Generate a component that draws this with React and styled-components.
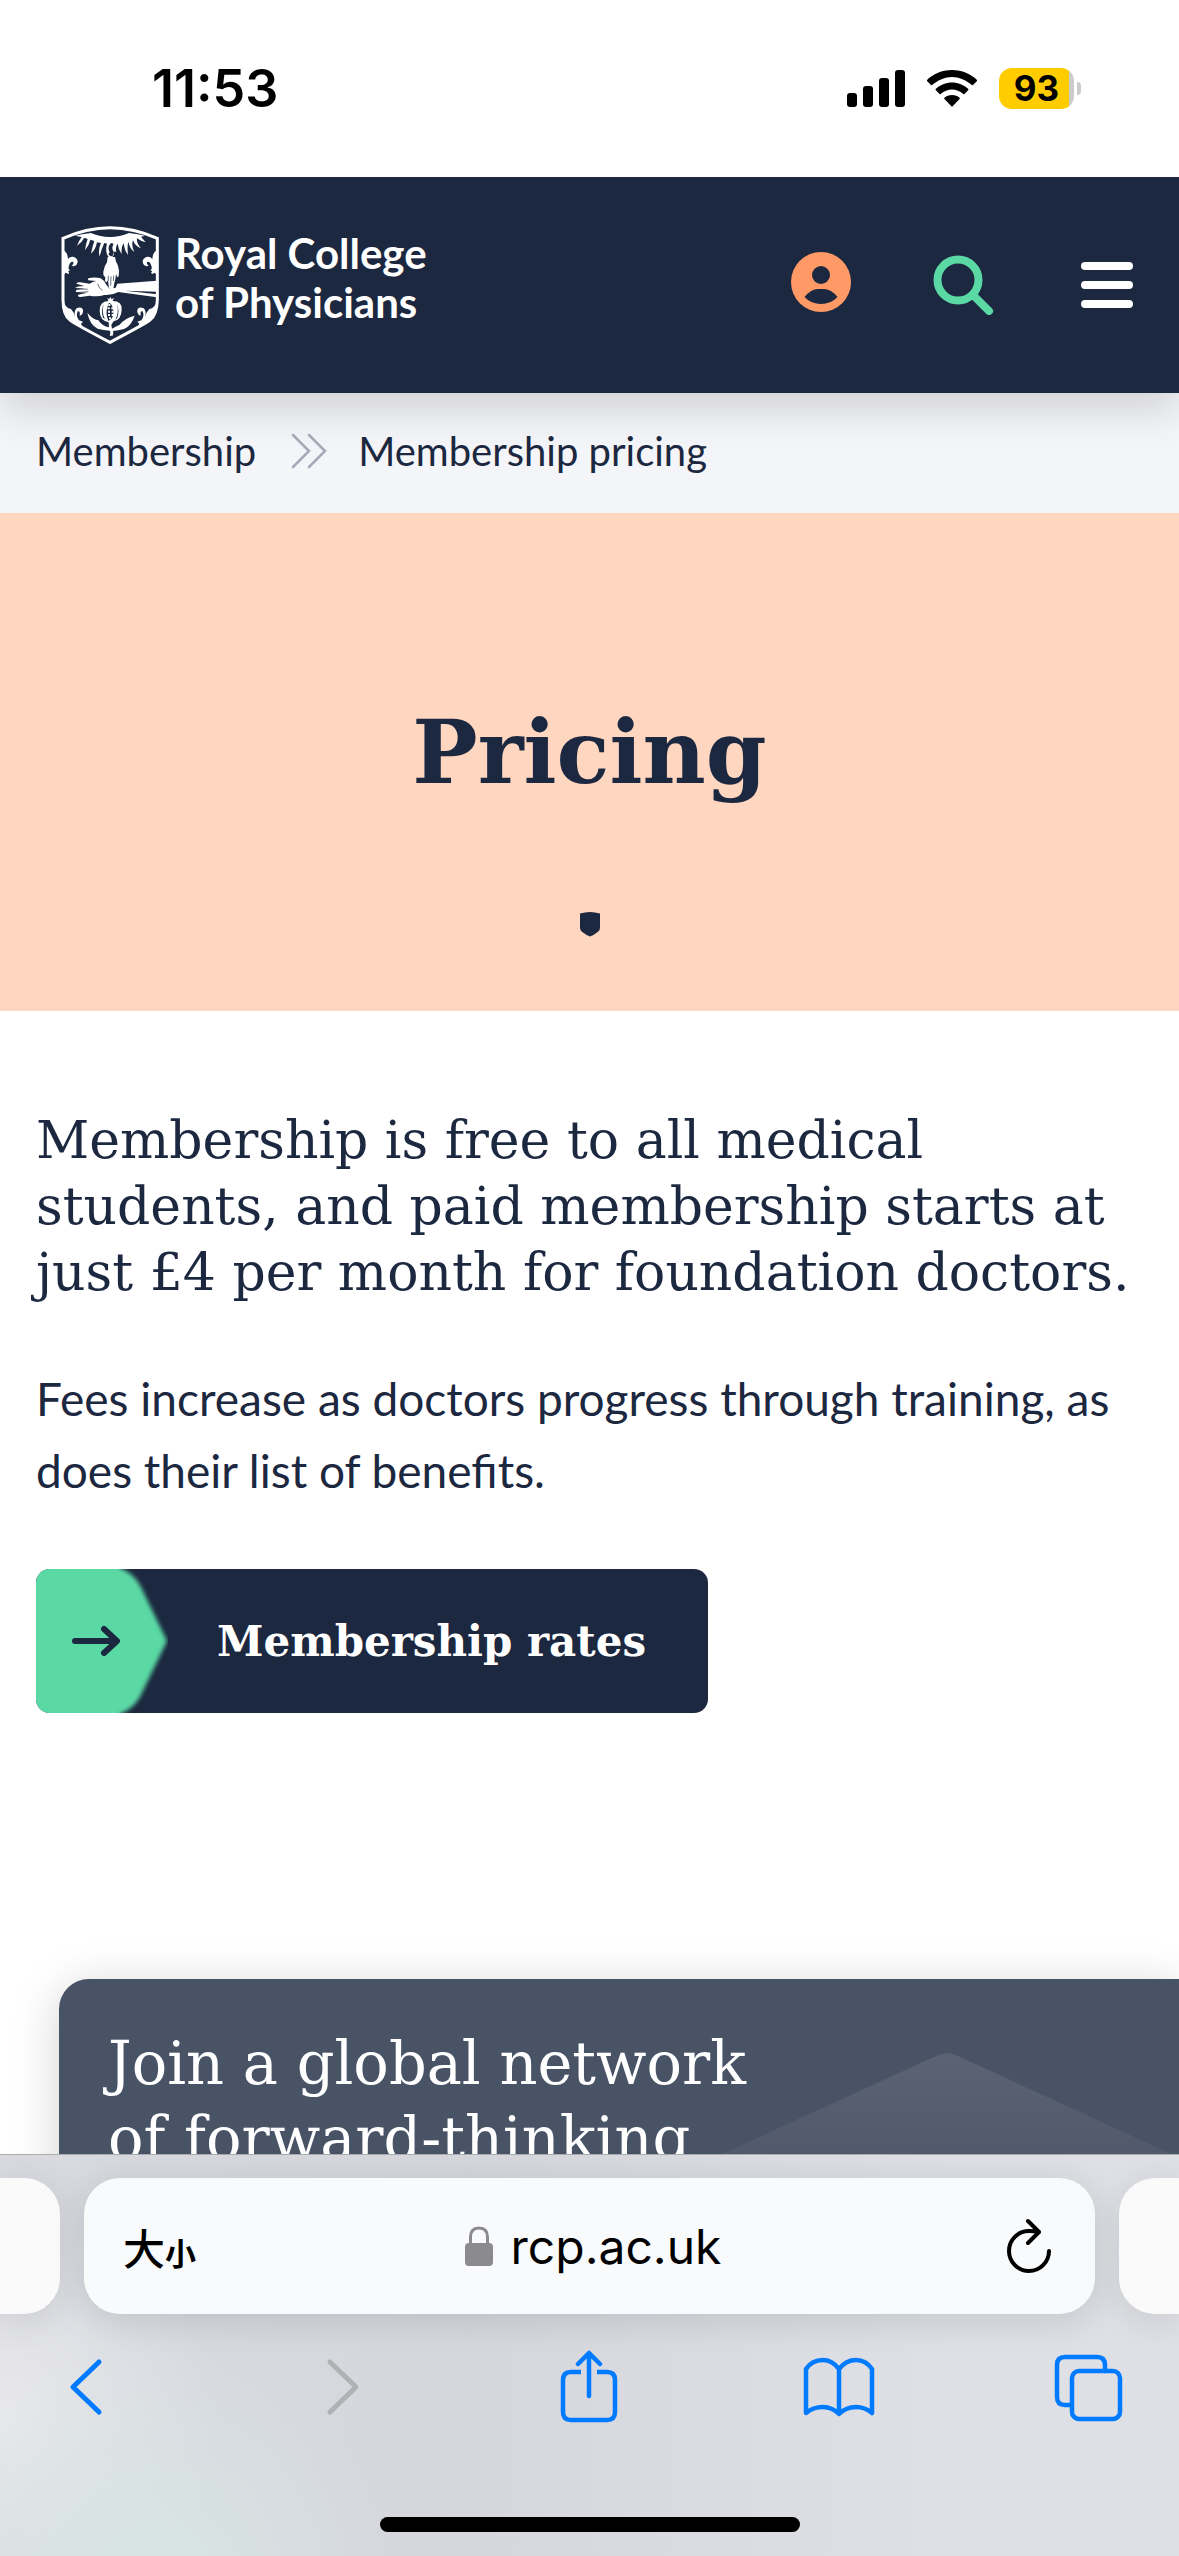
import styled, { createGlobalStyle } from "styled-components";

const navy = "#1c2840";
const green = "#5ad9a4";
const blue = "#007aff";
const slab = `"DejaVu Serif", serif`;
const sans = `Lato, "Liberation Sans", sans-serif`;
const system = `Inter, "Liberation Sans", sans-serif`;

function App() {
  return (
    <>
      <GlobalStyle />
      <Screen>
        <StatusBar>
          <time>11:53</time>
          <StatusIcons>
            <SignalIcon />
            <WifiIcon />
            <Battery>
              <BatteryLevel>93</BatteryLevel>
              <BatteryCap />
            </Battery>
          </StatusIcons>
        </StatusBar>

        <Page>
          <Header>
            <Brand href="#">
              <Crest />
              <BrandName>
                Royal College
                <br />
                of Physicians
              </BrandName>
            </Brand>
            <HeaderActions>
              <IconButton aria-label="Account"><AccountIcon /></IconButton>
              <IconButton aria-label="Search"><SearchIcon /></IconButton>
              <IconButton aria-label="Menu"><MenuIcon /></IconButton>
            </HeaderActions>
          </Header>

          <Breadcrumbs aria-label="Breadcrumb">
            <a href="#">Membership</a>
            <svg width="40" height="36" viewBox="0 0 40 36" fill="none" stroke="#a7a9b8" strokeWidth="2.500" strokeLinecap="round" aria-hidden="true">
              <path d="M6 2 L22 18 L6 34 M22 2 L38 18 L22 34" />
            </svg>
            <a href="#">Membership pricing</a>
          </Breadcrumbs>

          <Hero>
            <h1>Pricing</h1>
            <svg width="22" height="26" viewBox="0 0 22 26" fill={navy} aria-hidden="true">
              <path d="M1 2.500 Q11 -0.500 21 2.500 V16 Q21 20 18 21.500 Q15 24 11 25.500 Q7 24 4 21.500 Q1 20 1 16 Z" />
            </svg>
          </Hero>

          <Content>
            <Intro>
              Membership is free to all medical students, and paid membership starts at just £4 per month for foundation doctors.
            </Intro>
            <Body>
              Fees increase as doctors progress through training, as does their list of benefits.
            </Body>
            <RatesLink href="#">
              <svg width="132" height="144" viewBox="0 0 132 144" aria-hidden="true">
                <defs>
                  <filter id="soft" x="-10%" y="-10%" width="120%" height="120%">
                    <feGaussianBlur stdDeviation="2" />
                  </filter>
                </defs>
                <path d="M-10 -10 H84 V-1 Q97 4 104 16 L131 72 L104 128 Q97 140 84 145 V154 H-10 Z" fill={green} filter="url(#soft)" />
                <path d="M39 72 H80 M68 60 L81 72 L68 84" fill="none" stroke={navy} strokeWidth="6" strokeLinecap="round" strokeLinejoin="round" />
              </svg>
              <span>Membership rates</span>
            </RatesLink>
          </Content>

          <Card>
            <h2>
              Join a global network
              <br />
              of forward-thinking
            </h2>
            <CardShape />
          </Card>
        </Page>

        <BrowserBar>
          <TabStrip>
            <TabEdge $side="left" />
            <AddressBar>
              <TextSizeButton aria-label="Text size">大<small>小</small></TextSizeButton>
              <Address>
                <LockIcon />
                rcp.ac.uk
              </Address>
              <ReloadButton aria-label="Reload"><ReloadIcon /></ReloadButton>
            </AddressBar>
            <TabEdge $side="right" />
          </TabStrip>
          <Toolbar>
            <ToolButton aria-label="Back">
              <path d="M48 12 L22 37 L48 62" strokeWidth="5" />
            </ToolButton>
            <ToolButton aria-label="Forward" disabled>
              <path d="M29 12 L55 37 L29 62" strokeWidth="5" />
            </ToolButton>
            <ToolButton aria-label="Share">
              <path d="M29 22 H19 Q11 22 11 30 V62 Q11 70 19 70 H55 Q63 70 63 62 V30 Q63 22 55 22 H45" strokeLinecap="butt" />
              <path d="M37 46 V3 M26 14 L37 3 L48 14" />
            </ToolButton>
            <ToolButton aria-label="Bookmarks">
              <path d="M37 63 V19 Q30 10 21 10 Q10 10 4 19 V63 Q11 57 21 57 Q30 57 37 64 Q44 57 54 57 Q63 57 70 63 V19 Q64 10 54 10 Q44 10 37 19" />
            </ToolButton>
            <ToolButton aria-label="Tabs">
              <path d="M19 55 H13 Q5 55 5 47 V15 Q5 7 13 7 H45 Q53 7 53 15 V21" />
              <rect x="20" y="21" width="48" height="48" rx="7" />
            </ToolButton>
          </Toolbar>
          <HomeIndicator />
        </BrowserBar>
      </Screen>
    </>
  );
}

function SignalIcon() {
  return (
    <svg width="58" height="38" viewBox="0 0 58 38" aria-hidden="true">
      <rect x="0" y="23" width="10" height="14" rx="3" />
      <rect x="16" y="16" width="10" height="21" rx="3" />
      <rect x="32" y="8" width="10" height="29" rx="3" />
      <rect x="48" y="0" width="10" height="37" rx="3" />
    </svg>
  );
}

function WifiIcon() {
  return (
    <svg width="50" height="38" viewBox="0 1 50 38" aria-hidden="true">
      <path d="M25 1 C35 1 44 5 50 11 Q50.300 11.600 50 12 L46 16 Q45.400 16.400 44.800 16 C39 11 32 8 25 8 C18 8 11 11 5.200 16 Q4.600 16.400 4 16 L0 12 Q-0.300 11.600 0 11 C6 5 15 1 25 1 Z" />
      <path d="M25 13.500 C31 13.500 37 16 41.300 20 Q41.700 20.600 41.300 21 L37.500 25 Q36.900 25.400 36.300 25 C33 22 29 20.500 25 20.500 C21 20.500 17 22 13.700 25 Q13.100 25.400 12.500 25 L8.700 21 Q8.300 20.600 8.700 20 C13 16 19 13.500 25 13.500 Z" />
      <path d="M25 26 C28 26 30.500 27 32.600 28.800 Q33 29.400 32.600 30 L25.600 37.200 Q25 37.700 24.400 37.200 L17.400 30 Q17 29.400 17.400 28.800 C19.500 27 22 26 25 26 Z" />
    </svg>
  );
}

function AccountIcon() {
  return (
    <svg width="60" height="66" viewBox="0 0 60 66" aria-hidden="true">
      <circle cx="30" cy="30" r="30" fill="#ff9a66" />
      <circle cx="30" cy="23" r="9" fill={navy} />
      <path d="M13.500 45 Q20 37 27 37 H33 Q40 37 46.500 45 Q40 52 30 52 Q20 52 13.500 45 Z" fill={navy} />
    </svg>
  );
}

function SearchIcon() {
  return (
    <svg width="66" height="60" viewBox="0 0 66 60" fill="none" stroke={green} aria-hidden="true">
      <circle cx="25" cy="25" r="20.500" strokeWidth="8" />
      <path d="M40 40 L56 56" strokeWidth="8" strokeLinecap="round" />
    </svg>
  );
}

function MenuIcon() {
  return (
    <svg width="52" height="60" viewBox="0 0 52 60" fill="#fff" aria-hidden="true">
      <rect y="7" width="52" height="8" rx="4" />
      <rect y="26" width="52" height="8" rx="4" />
      <rect y="45" width="52" height="8" rx="4" />
    </svg>
  );
}

function LockIcon() {
  return (
    <svg width="28" height="40" viewBox="0 0 28 40" aria-hidden="true">
      <path d="M5.500 18 V11 Q5.500 2 14 2 Q22.500 2 22.500 11 V18" fill="none" stroke="#8b8a8f" strokeWidth="3" />
      <rect x="0" y="17" width="28" height="23" rx="4" fill="#8b8a8f" />
    </svg>
  );
}

function ReloadIcon() {
  return (
    <svg width="44" height="56" viewBox="0 0 44 56" fill="none" stroke="#000" strokeWidth="4" strokeLinecap="round" strokeLinejoin="round" aria-hidden="true">
      <path d="M42 33 A20 20 0 1 1 22 13 Q27 13 32 14 M21 3 L32 14 L21 25" />
    </svg>
  );
}

function Crest() {
  return (
    <svg width="98" height="119" viewBox="18 17 294 357" fill="#fff" aria-hidden="true">
      <path d="M24 54 Q165 -10 307 54 V238 Q306 284 284 300 Q268 312 165 366 Q62 312 46 300 Q24 284 24 238 Z" fill="none" stroke="#fff" strokeWidth="9" />
      {/* sun and rays */}
      <path d="M60 46 Q80 42 108 38 Q165 62 222 38 Q250 42 270 46 L258 49 Q264 56 272 66 Q256 62 246 54 Q244 68 258 84 Q240 78 234 60 Q228 74 238 95 Q224 84 220 64 Q216 78 219 104 Q208 90 206 68 Q198 80 200 102 Q190 88 188 70 Q180 80 184 94 H176 Q168 84 176 70 L168 68 Q156 80 164 96 Q160 100 158 106 Q150 92 156 70 L148 68 Q140 84 134 108 Q128 90 138 68 L126 66 Q122 88 108 100 Q112 80 118 62 L106 58 Q102 76 90 90 Q92 72 98 56 L88 52 Q82 64 66 76 Q70 64 80 50 Z" />
      <path d="M108 37 Q165 22 222 37 Q165 59 108 37 Z" fill={navy} />
      {/* descending hand */}
      <path d="M160 95 Q155 104 162 111 L173 109 Q180 101 174 94 Q178 107 168 108 Q158 104 160 95 Z" />
      <path d="M158 110 L180 110 Q181 124 189 136 Q194 150 191 168 Q188 173 185 168 L183 160 Q182 178 178 188 L175 205 Q167 209 162 204 L159 180 Q154 190 150 181 L151 170 Q144 168 145 154 Q148 136 156 126 Z" />
      <path d="M160 166 V182 M168 168 L167 196 M176 166 L175 182" stroke={navy} strokeWidth="2" fill="none" />
      {/* outstretched arm */}
      <path d="M60 203 Q66 197 88 197 L64 190 Q65 184 76 186 L104 190 Q112 184 124 182 L100 180 Q96 176 102 173 Q120 169 137 174 Q148 180 153 192 L164 206 L182 202 L187 190 L306 181 V214 L210 211 L306 222 V231 L190 215 Q170 226 148 224 Q128 230 104 226 L76 230 Q66 229 70 223 L96 217 L66 216 Q58 212 66 208 L90 206 Z" />
      <path d="M62 204 L98 207 M66 217 L100 214 M128 190 Q131 204 142 210" stroke={navy} strokeWidth="2" fill="none" />
      {/* pomegranate */}
      <path d="M157 232 L162 237 L166 230 L170 237 L177 232 L173 242 Q202 242 200 268 Q199 298 176 303 L169 313 L171 325 Q184 317 194 313 Q208 294 239 286 Q229 317 207 326 Q190 330 174 332 Q177 340 173 346 L164 346 Q168 338 165 331 Q145 330 128 325 Q104 313 97 277 Q112 296 130 300 Q142 318 162 321 L161 306 Q134 301 134 272 Q133 244 160 242 Z" />
      <path d="M162 247 Q148 274 160 302 Q179 296 174 264 Q171 251 162 247 Z M146 251 Q139 277 150 296 L144 292 Q137 270 146 251 Z M186 251 Q193 275 181 298 L187 292 Q194 270 186 251 Z" fill={navy} />
      <path d="M160 254 h6 m-8 10 h6 m5 0 h5 m-15 10 h6 m5 0 h5 m-16 10 h6 m5 0 h4 m-12 10 h6" stroke="#fff" strokeWidth="6" fill="none" />
      {/* fleurs-de-lis on the sides */}
      <path id="fleur-side" d="M25 90 Q38 96 39 116 Q45 108 54 109 Q68 113 68 124 Q66 135 58 137 Q55 139 50 135 Q57 132 55 125 Q46 122 42 136 Q38 146 45 150 L39 153 Q45 157 40 161 L31 157 L25 166 Z" />
      <use href="#fleur-side" transform="matrix(-1 0 0 1 331 0)" />
      <path id="fleur-base" d="M25 238 Q30 264 48 266 Q58 276 60 290 Q56 270 66 263 Q80 258 84 268 Q86 282 74 286 Q76 270 68 273 Q62 288 72 300 L84 304 L78 310 L84 322 L78 322 Q50 304 38 290 Q25 272 25 238 Z" />
      <use href="#fleur-base" transform="matrix(-1 0 0 1 331 0)" />
    </svg>
  );
}

function ToolButton({ children, ...props }) {
  return (
    <ToolButtonBase {...props}>
      <svg width="74" height="74" viewBox="0 0 74 74" fill="none" stroke="currentColor" strokeWidth="4.500" strokeLinecap="round" strokeLinejoin="round" aria-hidden="true">
        {children}
      </svg>
    </ToolButtonBase>
  );
}

const GlobalStyle = createGlobalStyle`
  * {
    box-sizing: border-box;
    margin: 0;
  }
  body {
    background: #fff;
    color: ${navy};
    font-family: ${sans};
  }
  a {
    color: inherit;
    text-decoration: none;
  }
  button {
    padding: 0;
    border: 0;
    background: none;
    color: inherit;
  }
  svg {
    display: block;
    flex-shrink: 0;
  }
`;

const Screen = styled.div`
  display: flex;
  flex-direction: column;
  height: 100vh;
  overflow: hidden;
`;

const StatusBar = styled.div`
  display: flex;
  align-items: center;
  justify-content: space-between;
  flex-shrink: 0;
  height: 177px;
  padding: 0 98px 0 152px;
  color: #000;
  font-family: ${system};
  font-size: 52px;
  font-weight: 600;
`;

const StatusIcons = styled.div`
  display: flex;
  align-items: center;
  gap: 22px;
`;

const Battery = styled.div`
  display: flex;
  align-items: center;
  gap: 3px;
`;

const BatteryLevel = styled.span`
  width: 75px;
  border-radius: 13px;
  background: linear-gradient(90deg, #ffcc00 70px, #cbcbcb 70px);
  font-size: 35px;
  font-weight: 700;
  line-height: 41px;
  text-align: center;
`;

const BatteryCap = styled.span`
  width: 4px;
  height: 13px;
  border-radius: 0 4px 4px 0;
  background: #cbcbcb;
`;

const Page = styled.main`
  flex: 1;
  min-height: 0;
  overflow: hidden;
`;

const Header = styled.header`
  position: relative;
  display: flex;
  align-items: center;
  justify-content: space-between;
  height: 216px;
  padding: 0 46px 0 61px;
  background: ${navy};
  box-shadow: 0 16px 40px rgba(0, 0, 0, 0.15);
`;

const Brand = styled.a`
  display: flex;
  gap: 16px;
  color: #fff;
`;

const BrandName = styled.span`
  padding-top: 3px;
  font-size: 42px;
  font-weight: 700;
  line-height: 49px;
`;

const HeaderActions = styled.div`
  display: flex;
  align-items: center;
  gap: 82px;
`;

const IconButton = styled.button`
  display: flex;
`;

const Breadcrumbs = styled.nav`
  display: flex;
  align-items: center;
  gap: 31px;
  height: 120px;
  padding: 0 36px 4px;
  background: #f4f5f8;
  font-size: 40px;
`;

const Hero = styled.section`
  display: flex;
  flex-direction: column;
  align-items: center;
  gap: 110px;
  padding: 192px 36px 74px;
  background: #ffd6c0;
  h1 {
    font-family: ${slab};
    font-size: 87px;
    line-height: 96px;
  }
`;

const Content = styled.section`
  padding: 96px 36px 0;
`;

const Intro = styled.p`
  margin-bottom: 58px;
  font-family: ${slab};
  font-size: 52px;
  line-height: 66px;
`;

const Body = styled.p`
  margin-bottom: 62px;
  font-size: 46px;
  line-height: 72px;
`;

const RatesLink = styled.a`
  display: flex;
  align-items: center;
  gap: 49px;
  width: fit-content;
  padding-right: 62px;
  overflow: hidden;
  border-radius: 14px;
  background: ${navy};
  color: #fff;
  font-family: ${slab};
  font-size: 42px;
  font-weight: 700;
`;

const Card = styled.section`
  display: flex;
  align-items: flex-start;
  justify-content: space-between;
  height: 600px;
  margin: 266px 0 0 59px;
  padding: 47px 0 0 49px;
  border-radius: 30px 0 0 0;
  background: #485365;
  box-shadow: 0 8px 48px rgba(0, 0, 0, 0.18);
  color: #fff;
  h2 {
    z-index: 1;
    font-family: ${slab};
    font-size: 59px;
    font-weight: 400;
    line-height: 75px;
    white-space: nowrap;
  }
`;

const CardShape = styled.div`
  flex-shrink: 0;
  width: 872px;
  height: 200px;
  margin: 25px -204px 0 -300px;
  background: linear-gradient(#5c6373, #50586b 110px);
  clip-path: polygon(49% 2%, 50% 1%, 51% 2%, 100% 100%, 0 100%);
`;

const BrowserBar = styled.footer`
  position: relative;
  flex-shrink: 0;
  padding: 23px 0 24px;
  border-top: 1px solid #a9abb1;
  background:
    radial-gradient(circle at 150px 430px, #d8e6e4, transparent 240px),
    radial-gradient(circle at 0 260px, #e8e8eb, transparent 220px),
    linear-gradient(90deg, #d8dae0, #d5d7dd 40%, #dfe0e5 80%);
`;

const TabStrip = styled.div`
  display: flex;
  gap: 24px;
`;

const TabEdge = styled.div`
  width: 60px;
  border-radius: ${(p) => (p.$side === "left" ? "0 36px 36px 0" : "36px 0 0 36px")};
  background: #fafafb;
  box-shadow: 0 6px 36px rgba(0, 0, 0, 0.1);
`;

const AddressBar = styled.div`
  display: grid;
  grid-template-columns: 1fr auto 1fr;
  align-items: center;
  flex: 1;
  height: 136px;
  padding: 0 44px 0 39px;
  border-radius: 36px;
  background: #f9fafb;
  box-shadow: 0 6px 36px rgba(0, 0, 0, 0.12);
  color: #000;
  font-family: ${system};
`;

const TextSizeButton = styled.button`
  justify-self: start;
  font-family: "Noto Sans CJK SC", sans-serif;
  font-size: 42px;
  font-weight: 500;
  small {
    font-size: 31px;
    font-weight: 700;
  }
`;

const Address = styled.div`
  display: flex;
  align-items: center;
  gap: 18px;
  padding-left: 12px;
  font-size: 48px;
`;

const ReloadButton = styled.button`
  justify-self: end;
`;

const Toolbar = styled.div`
  display: flex;
  justify-content: space-between;
  margin: 36px 53px 93px 51px;
`;

const ToolButtonBase = styled.button`
  color: ${blue};
  &:disabled {
    color: #b0b1b5;
  }
`;

const HomeIndicator = styled.div`
  width: 420px;
  height: 15px;
  margin: 0 auto;
  border-radius: 8px;
  background: #000;
`;

export default App;
